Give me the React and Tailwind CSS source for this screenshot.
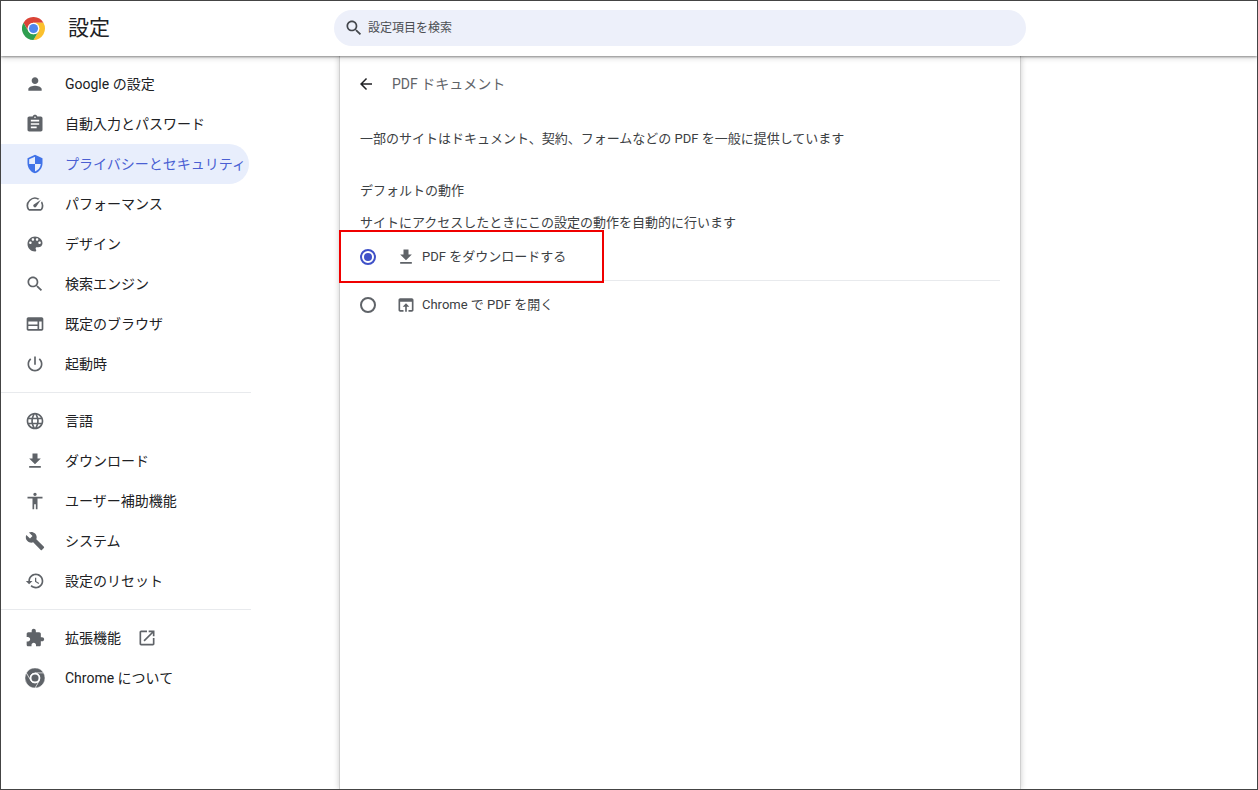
import React from 'react';

const ICONS = {
    person: 'M12 12c2.21 0 4-1.79 4-4s-1.79-4-4-4-4 1.79-4 4 1.79 4 4 4zm0 2c-2.67 0-8 1.34-8 4v2h16v-2c0-2.66-5.33-4-8-4z',
    assignment: 'M19 3h-4.18C14.4 1.84 13.3 1 12 1c-1.3 0-2.4.84-2.82 2H5c-1.1 0-2 .9-2 2v14c0 1.1.9 2 2 2h14c1.1 0 2-.9 2-2V5c0-1.1-.9-2-2-2zm-7 0c.55 0 1 .45 1 1s-.45 1-1 1-1-.45-1-1 .45-1 1-1zm2 14H7v-2h7v2zm3-4H7v-2h10v2zm0-4H7V7h10v2z',
    security: 'M12 1L3 5v6c0 5.55 3.84 10.74 9 12 5.16-1.26 9-6.45 9-12V5l-9-4zm0 10.99h7c-.53 4.12-3.28 7.79-7 8.94V12H5V6.3l7-3.11v8.8z',
    speed: 'M20.38 8.57l-1.23 1.85a8 8 0 0 1-.22 7.58H5.07A8 8 0 0 1 15.58 6.85l1.85-1.23A10 10 0 0 0 3.35 19a2 2 0 0 0 1.72 1h13.85a2 2 0 0 0 1.74-1 10 10 0 0 0-.27-10.44zM10.59 15.41a2 2 0 0 0 2.83 0l5.66-8.49-8.49 5.66a2 2 0 0 0 0 2.83z',
    palette: 'M12 3c-4.97 0-9 4.03-9 9s4.03 9 9 9c.83 0 1.5-.67 1.5-1.5 0-.39-.15-.74-.39-1.01-.23-.26-.38-.61-.38-.99 0-.83.67-1.5 1.5-1.5H16c2.76 0 5-2.24 5-5 0-4.42-4.03-8-9-8zm-5.5 9c-.83 0-1.5-.67-1.5-1.5S5.67 9 6.5 9 8 9.67 8 10.5 7.33 12 6.5 12zm3-4C8.67 8 8 7.33 8 6.5S8.67 5 9.5 5s1.5.67 1.5 1.5S10.33 8 9.5 8zm5 0c-.83 0-1.5-.67-1.5-1.5S13.67 5 14.5 5s1.5.67 1.5 1.5S15.33 8 14.5 8zm3 4c-.83 0-1.5-.67-1.5-1.5S16.67 9 17.5 9s1.5.67 1.5 1.5-.67 1.5-1.5 1.5z',
    search: 'M15.5 14h-.79l-.28-.27C15.41 12.59 16 11.11 16 9.5 16 5.91 13.09 3 9.5 3S3 5.91 3 9.5 5.91 16 9.5 16c1.61 0 3.09-.59 4.23-1.57l.27.28v.79l5 4.99L20.49 19l-4.99-5zm-6 0C7.01 14 5 11.99 5 9.5S7.01 5 9.5 5 14 7.01 14 9.5 11.99 14 9.5 14z',
    web: 'M20 4H4c-1.1 0-2 .9-2 2v12c0 1.1.9 2 2 2h16c1.1 0 2-.9 2-2V6c0-1.1-.9-2-2-2zM4 9h11v3.5H4V9zm0 5.5h11V18H4v-3.5zM20 18h-3V9h3v9z',
    power: 'M13 3h-2v10h2V3zm4.83 2.17l-1.42 1.42C17.99 7.86 19 9.81 19 12c0 3.87-3.13 7-7 7s-7-3.13-7-7c0-2.19 1.01-4.14 2.58-5.42L6.17 5.17C4.23 6.82 3 9.26 3 12c0 4.97 4.03 9 9 9s9-4.03 9-9c0-2.74-1.23-5.18-3.17-6.83z',
    language: 'M11.99 2C6.47 2 2 6.48 2 12s4.47 10 9.99 10C17.52 22 22 17.52 22 12S17.52 2 11.99 2zm6.93 6h-2.95c-.32-1.25-.78-2.45-1.38-3.56 1.84.63 3.37 1.91 4.33 3.56zM12 4.04c.83 1.2 1.48 2.53 1.91 3.96h-3.82c.43-1.43 1.08-2.76 1.91-3.96zM4.26 14C4.1 13.36 4 12.69 4 12s.1-1.36.26-2h3.38c-.08.66-.14 1.32-.14 2 0 .68.06 1.34.14 2H4.26zm.82 2h2.95c.32 1.25.78 2.45 1.38 3.56-1.84-.63-3.37-1.9-4.33-3.56zm2.95-8H5.08c.96-1.66 2.49-2.93 4.33-3.56C8.81 5.55 8.35 6.75 8.03 8zM12 19.96c-.83-1.2-1.48-2.53-1.91-3.96h3.82c-.43 1.43-1.08 2.76-1.91 3.96zM14.34 14H9.66c-.09-.66-.16-1.32-.16-2 0-.68.07-1.35.16-2h4.68c.09.65.16 1.32.16 2 0 .68-.07 1.34-.16 2zm.25 5.56c.6-1.11 1.06-2.31 1.38-3.56h2.95c-.96 1.65-2.49 2.93-4.33 3.56zM16.36 14c.08-.66.14-1.32.14-2 0-.68-.06-1.34-.14-2h3.38c.16.64.26 1.31.26 2s-.1 1.36-.26 2h-3.38z',
    download: 'M19 9h-4V3H9v6H5l7 7 7-7zM5 18v2h14v-2H5z',
    accessibility: 'M12 2c1.1 0 2 .9 2 2s-.9 2-2 2-2-.9-2-2 .9-2 2-2zm9 7h-6v13h-2v-6h-2v6H9V9H3V7h18v2z',
    build: 'M22.7 19l-9.1-9.1c.9-2.3.4-5-1.5-6.9-2-2-5-2.4-7.4-1.3L9 6 6 9 1.6 4.7C.4 7.1.9 10.1 2.9 12.1c1.9 1.9 4.6 2.4 6.9 1.5l9.1 9.1c.4.4 1 .4 1.4 0l2.3-2.3c.5-.4.5-1.1.1-1.4z',
    restore: 'M13 3c-4.97 0-9 4.03-9 9H1l3.89 3.89.07.14L9 12H6c0-3.87 3.13-7 7-7s7 3.13 7 7-3.13 7-7 7c-1.93 0-3.68-.79-4.94-2.06l-1.42 1.42C8.27 19.99 10.51 21 13 21c4.97 0 9-4.03 9-9s-4.03-9-9-9zm-1 5v5l4.28 2.54.72-1.21-3.5-2.08V8H12z',
    extension: 'M20.5 11H19V7c0-1.1-.9-2-2-2h-4V3.5C13 2.12 11.88 1 10.5 1S8 2.12 8 3.5V5H4c-1.1 0-1.99.9-1.99 2v3.8H3.5c1.49 0 2.7 1.21 2.7 2.7s-1.21 2.7-2.7 2.7H2V20c0 1.1.9 2 2 2h3.8v-1.5c0-1.49 1.21-2.7 2.7-2.7 1.49 0 2.7 1.21 2.7 2.7V22H17c1.1 0 2-.9 2-2v-4h1.5c1.38 0 2.5-1.12 2.5-2.5S21.88 11 20.5 11z',
    openNew: 'M19 19H5V5h7V3H5c-1.11 0-2 .9-2 2v14c0 1.1.89 2 2 2h14c1.1 0 2-.9 2-2v-7h-2v7zM14 3v2h3.59l-9.83 9.83 1.41 1.41L19 6.41V10h2V3h-7z',
    back: 'M20 11H7.83l5.59-5.59L12 4l-8 8 8 8 1.41-1.41L7.83 13H20v-2z',
    openBrowser: 'M19 4H5c-1.11 0-2 .9-2 2v12c0 1.1.89 2 2 2h4v-2H5V8h14v10h-4v2h4c1.1 0 2-.9 2-2V6c0-1.1-.89-2-2-2zm-7 6l-4 4h3v6h2v-6h3l-4-4z',
};

const Icon = ({ name, className = 'w-5 h-5 text-[#5f6368]' }) => (
    <svg viewBox="0 0 24 24" fill="currentColor" className={className}>
        <path d={ICONS[name]} />
    </svg>
);

const ChromeLogo = () => (
    <svg viewBox="0 0 48 48" className="w-[23px] h-[23px] shrink-0">
        <path fill="#db4437" d="M44.78 12A24 24 0 0 0 3.2 12L13.6 30A12 12 0 0 1 24 12Z" />
        <path fill="#fbc02d" d="M44.78 12A24 24 0 0 1 24 48L34.4 30A12 12 0 0 0 24 12Z" />
        <path fill="#2e9e4f" d="M3.2 12A24 24 0 0 0 24 48L34.4 30A12 12 0 0 1 13.6 30Z" />
        <circle cx="24" cy="24" r="12" fill="#fff" />
        <circle cx="24" cy="24" r="9.5" fill="#4f86ec" />
    </svg>
);

const ChromeMono = () => (
    <svg viewBox="0 0 48 48" className="w-5 h-5">
        <g fill="#5f6368" stroke="#fff" strokeWidth="1.2">
            <path d="M44.78 12A24 24 0 0 0 3.2 12L13.6 30A12 12 0 0 1 24 12Z" />
            <path d="M44.78 12A24 24 0 0 1 24 48L34.4 30A12 12 0 0 0 24 12Z" />
            <path d="M3.2 12A24 24 0 0 0 24 48L34.4 30A12 12 0 0 1 13.6 30Z" />
        </g>
        <circle cx="24" cy="24" r="12.5" fill="#fff" />
        <circle cx="24" cy="24" r="8.5" fill="#5f6368" />
    </svg>
);

const NavItem = ({ icon, label, active, children }) => (
    <div className={`flex items-center h-10 w-[248px] pl-6 rounded-r-[20px] text-sm whitespace-nowrap ${active ? 'bg-[#e8eefc] text-[#4a5fd3]' : 'text-[#202124]'}`}>
        {icon === 'chrome' ? <ChromeMono /> : (
            <Icon name={icon} className={`w-5 h-5 shrink-0 ${active ? 'text-[#4173e8]' : 'text-[#5f6368]'}`} />
        )}
        <span className="ml-[20px]">{label}</span>
        {children}
    </div>
);

const RadioRow = ({ checked, icon, label, divider }) => (
    <div className={`flex items-center h-[48px] ${divider ? 'border-b border-[#e8eaed]' : ''}`}>
        <span className={`flex items-center justify-center w-4 h-4 rounded-full border-2 ${checked ? 'border-[#3f51c8]' : 'border-[#5f6368]'}`}>
            {checked && <span className="w-2 h-2 rounded-full bg-[#3f51c8]" />}
        </span>
        <Icon name={icon} className="w-5 h-5 ml-[20px] text-[#5f6368]" />
        <span className="ml-[6px] text-[13px] text-[#3c4043]">{label}</span>
    </div>
);

export default function App() {
    return (
        <div className="relative flex flex-col w-[1258px] h-[790px] overflow-hidden bg-white border border-[#444] font-['Roboto','Noto_Sans_CJK_JP',sans-serif]">
            <header className="relative z-10 flex items-center h-[55px] pb-[1px] shrink-0 bg-white shadow-[0_1px_2px_rgba(0,0,0,0.4),0_2px_6px_rgba(0,0,0,0.15)]">
                <div className="flex items-center w-[333px] pl-[21px]">
                    <ChromeLogo />
                    <h1 className="ml-[23px] text-[21px] font-normal text-[#202124] leading-none">設定</h1>
                </div>
                <div className="flex items-center w-[692px] h-9 pl-[10px] rounded-full bg-[#edf0fa]">
                    <Icon name="search" className="w-[20px] h-[20px] text-[#44474c]" />
                    <span className="ml-[4px] text-xs text-[#4b4e52]">設定項目を検索</span>
                </div>
            </header>

            <div className="flex flex-1 min-h-0">
                <nav className="w-[338px] shrink-0 pt-2">
                    <NavItem icon="person" label="Google の設定" />
                    <NavItem icon="assignment" label="自動入力とパスワード" />
                    <NavItem icon="security" label="プライバシーとセキュリティ" active />
                    <NavItem icon="speed" label="パフォーマンス" />
                    <NavItem icon="palette" label="デザイン" />
                    <NavItem icon="search" label="検索エンジン" />
                    <NavItem icon="web" label="既定のブラウザ" />
                    <NavItem icon="power" label="起動時" />
                    <div className="w-[250px] h-px my-[8px] bg-[#e8eaed]" />
                    <NavItem icon="language" label="言語" />
                    <NavItem icon="download" label="ダウンロード" />
                    <NavItem icon="accessibility" label="ユーザー補助機能" />
                    <NavItem icon="build" label="システム" />
                    <NavItem icon="restore" label="設定のリセット" />
                    <div className="w-[250px] h-px my-[8px] bg-[#e8eaed]" />
                    <NavItem icon="extension" label="拡張機能">
                        <Icon name="openNew" className="w-5 h-5 ml-[16px] text-[#5f6368]" />
                    </NavItem>
                    <NavItem icon="chrome" label="Chrome について" />
                </nav>

                <main className="w-[682px] shrink-0 pl-[20px] pr-[20px] bg-white border-x border-[#d0d0d0] shadow-[0_0_6px_rgba(0,0,0,0.2)]">
                    <div className="flex items-center h-[55px] pt-[1px]">
                        <Icon name="back" className="w-[18px] h-[18px] text-[#202124] ml-[-3px]" />
                        <span className="ml-[17px] text-sm text-[#5f6368]">PDF ドキュメント</span>
                    </div>
                    <p className="mt-[18px] text-[13px] leading-[20px] text-[#3c4043]">一部のサイトはドキュメント、契約、フォームなどの PDF を一般に提供しています</p>
                    <p className="mt-[32px] text-[13px] leading-[20px] text-[#3c4043]">デフォルトの動作</p>
                    <p className="mt-[12px] text-[13px] leading-[20px] text-[#3c4043]">サイトにアクセスしたときにこの設定の動作を自動的に行います</p>
                    <div>
                        <RadioRow checked icon="download" label="PDF をダウンロードする" divider />
                        <RadioRow icon="openBrowser" label="Chrome で PDF を開く" />
                    </div>
                </main>
            </div>

            {/* annotation box drawn on top of the screenshot */}
            <div className="absolute left-[338px] top-[229px] w-[265px] h-[53px] border-2 border-[#f00000] pointer-events-none z-20" />
        </div>
    );
}
